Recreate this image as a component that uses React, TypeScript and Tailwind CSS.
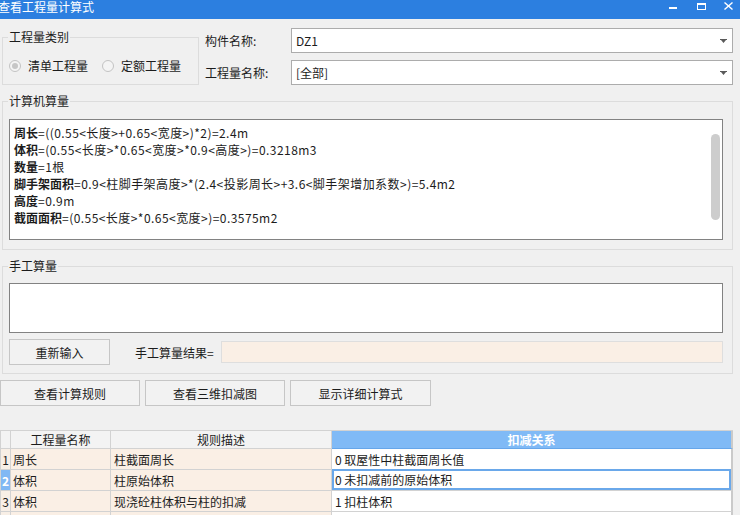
import React from "react";

const formulaLines: { label: string; rest: string }[] = [
  { label: "周长", rest: "=((0.55<长度>+0.65<宽度>)*2)=2.4m" },
  { label: "体积", rest: "=(0.55<长度>*0.65<宽度>*0.9<高度>)=0.3218m3" },
  { label: "数量", rest: "=1根" },
  { label: "脚手架面积", rest: "=0.9<柱脚手架高度>*(2.4<投影周长>+3.6<脚手架增加系数>)=5.4m2" },
  { label: "高度", rest: "=0.9m" },
  { label: "截面面积", rest: "=(0.55<长度>*0.65<宽度>)=0.3575m2" },
];

const rows = [
  { no: "1", name: "周长", rule: "柱截面周长", rel: "0 取屋性中柱截面周长值" },
  { no: "2", name: "体积", rule: "柱原始体积", rel: "0 未扣减前的原始体积", selected: true },
  { no: "3", name: "体积", rule: "现浇砼柱体积与柱的扣减", rel: "1 扣柱体积" },
  { no: "", name: "", rule: "", rel: "" },
];

function Arrow() {
  return (
    <svg width="7" height="4" viewBox="0 0 7 4" className="ml-auto mr-[5px]">
      <path d="M0 0h7v1H0z M1 1h5L3.5 4z" fill="#5a5a5a" />
    </svg>
  );
}

function Radio({ checked }: { checked?: boolean }) {
  return (
    <span className="w-[12px] h-[12px] rounded-full border border-[#c3c3c3] bg-[#f4f4f4] flex items-center justify-center">
      {checked && <span className="w-[6px] h-[6px] rounded-full bg-[#c6c6c6]" />}
    </span>
  );
}

function GroupLabel({ children }: { children: React.ReactNode }) {
  return (
    <span className="absolute left-[5px] top-[-10px] px-[1px] bg-[#f0f0f0] leading-[17px]">{children}</span>
  );
}

export default function App() {
  return (
    <div className="w-[740px] h-[515px] bg-[#f0f0f0] overflow-hidden text-[12px] leading-[17px] text-[#1c1c1c] font-['Noto_Sans_CJK_SC','Noto_Sans',sans-serif]">
      {/* title bar */}
      <div className="h-[19px] bg-[#2c7fe0] flex items-start text-white">
        <span className="ml-[-2px] mt-[-2px]">查看工程量计算式</span>
        <div className="ml-auto flex items-start">
          <span className="mt-[7px] w-[8px] h-[2px] bg-white" />
          <span className="ml-[20px] mt-[3px] w-[9px] h-[7px] border border-white border-t-2" />
          <svg width="9" height="8" viewBox="0 0 9 8" className="ml-[18px] mt-[2px] mr-[7px]">
            <path d="M0.5 0.5L8.5 7.5M8.5 0.5L0.5 7.5" stroke="white" strokeWidth="1.4" />
          </svg>
        </div>
      </div>

      {/* top */}
      <div className="flex pt-[9px]">
        <div className="relative ml-[2px] mt-[9px] w-[197px] h-[48px] border border-[#dcdcdc]">
          <GroupLabel>工程量类别</GroupLabel>
          <div className="flex items-center mt-[19px] ml-[6px] h-[17px]">
            <Radio checked />
            <span className="ml-[7px]">清单工程量</span>
            <span className="ml-[14px]">
              <Radio />
            </span>
            <span className="ml-[7px]">定额工程量</span>
          </div>
        </div>
        <div className="ml-[6px] flex flex-col gap-[7px]">
          <div className="flex items-center h-[25px]">
            <span className="w-[86px]">构件名称:</span>
            <div className="w-[442px] h-[25px] border border-[#acacac] bg-white flex items-center pl-[4px]">
              DZ1
              <Arrow />
            </div>
          </div>
          <div className="flex items-center h-[25px]">
            <span className="w-[86px]">工程量名称:</span>
            <div className="w-[442px] h-[25px] border border-[#acacac] bg-white flex items-center pl-[4px]">
              [全部]
              <Arrow />
            </div>
          </div>
        </div>
      </div>

      {/* 计算机算量 */}
      <div className="relative ml-[2px] mt-[16px] w-[731px] h-[149px] border border-[#dcdcdc]">
        <GroupLabel>计算机算量</GroupLabel>
        <div className="relative ml-[6px] mt-[17px] w-[714px] h-[121px] border border-[#828282] bg-white pl-[4px] pt-[4px]">
          {formulaLines.map((l) => (
            <div key={l.label} className="whitespace-nowrap">
              <span className="font-bold">{l.label}</span>
              <span className="tracking-[0.45px]">{l.rest}</span>
            </div>
          ))}
          <span className="absolute left-[701px] top-[14px] w-[9px] h-[86px] rounded-full bg-[#cdcdcd]" />
        </div>
      </div>

      {/* 手工算量 */}
      <div className="relative ml-[2px] mt-[16px] w-[731px] h-[108px] border border-[#dcdcdc]">
        <GroupLabel>手工算量</GroupLabel>
        <div className="ml-[6px] mt-[16px] w-[714px] h-[50px] border border-[#828282] bg-white" />
        <div className="ml-[6px] mt-[6px] flex items-center h-[26px]">
          <button className="w-[101px] h-[26px] border border-[#c6c6c6] bg-[#f2f2f2]">重新输入</button>
          <span className="ml-[25px] w-[86px]">手工算量结果=</span>
          <div className="w-[502px] h-[22px] border border-[#dedede] bg-[#faefe5]" />
        </div>
      </div>

      {/* buttons */}
      <div className="mt-[6px] flex gap-[5px]">
        <button className="w-[140px] h-[26px] border border-[#c6c6c6] bg-[#f2f2f2]">查看计算规则</button>
        <button className="w-[140px] h-[26px] border border-[#c6c6c6] bg-[#f2f2f2]">查看三维扣减图</button>
        <button className="w-[141px] h-[26px] border border-[#c6c6c6] bg-[#f2f2f2]">显示详细计算式</button>
      </div>

      {/* table */}
      <div className="mt-[24px] w-[733px] border-l border-t border-[#d2d2d2]">
        <div className="flex h-[18px]">
          <div className="w-[10px] border-r border-b border-[#d2d2d2] bg-[#f3f3f3]" />
          <div className="w-[100px] border-r border-b border-[#d2d2d2] bg-[#f3f3f3] text-center">工程量名称</div>
          <div className="w-[221px] border-r border-b border-[#d2d2d2] bg-[#f3f3f3] text-center">规则描述</div>
          <div className="w-[401px] border-r-2 border-r-[#cacaca] border-b border-b-[#66a6ea] bg-[#80baf6] text-white text-center font-semibold">
            扣减关系
          </div>
        </div>
        {rows.map((r, i) => (
          <div key={i} className="flex h-[21px]">
            <div
              className={
                r.selected
                  ? "w-[10px] border-r border-b border-[#d2d2d2] bg-[#80b8f4] text-white font-bold flex items-center justify-center"
                  : "w-[10px] border-r border-b border-[#d2d2d2] bg-[#f8efe6] flex items-center justify-center"
              }
            >
              {r.no}
            </div>
            <div className="w-[100px] border-r border-b border-[#d2d2d2] bg-[#faefe5] flex items-center pl-[2px]">{r.name}</div>
            <div className="w-[221px] border-r border-b border-[#d2d2d2] bg-[#faefe5] flex items-center pl-[3px]">{r.rule}</div>
            <div
              className={
                r.selected
                  ? "w-[401px] border-r-2 border-r-[#cacaca] border-b border-b-[#d2d2d2] bg-white flex items-center pl-[3px] shadow-[inset_0_0_0_2px_#6aa8ea] -mt-[1px] h-[22px]"
                  : "w-[401px] border-r-2 border-r-[#cacaca] border-b border-b-[#d2d2d2] bg-white flex items-center pl-[3px]"
              }
            >
              {r.rel}
            </div>
          </div>
        ))}
      </div>
    </div>
  );
}
